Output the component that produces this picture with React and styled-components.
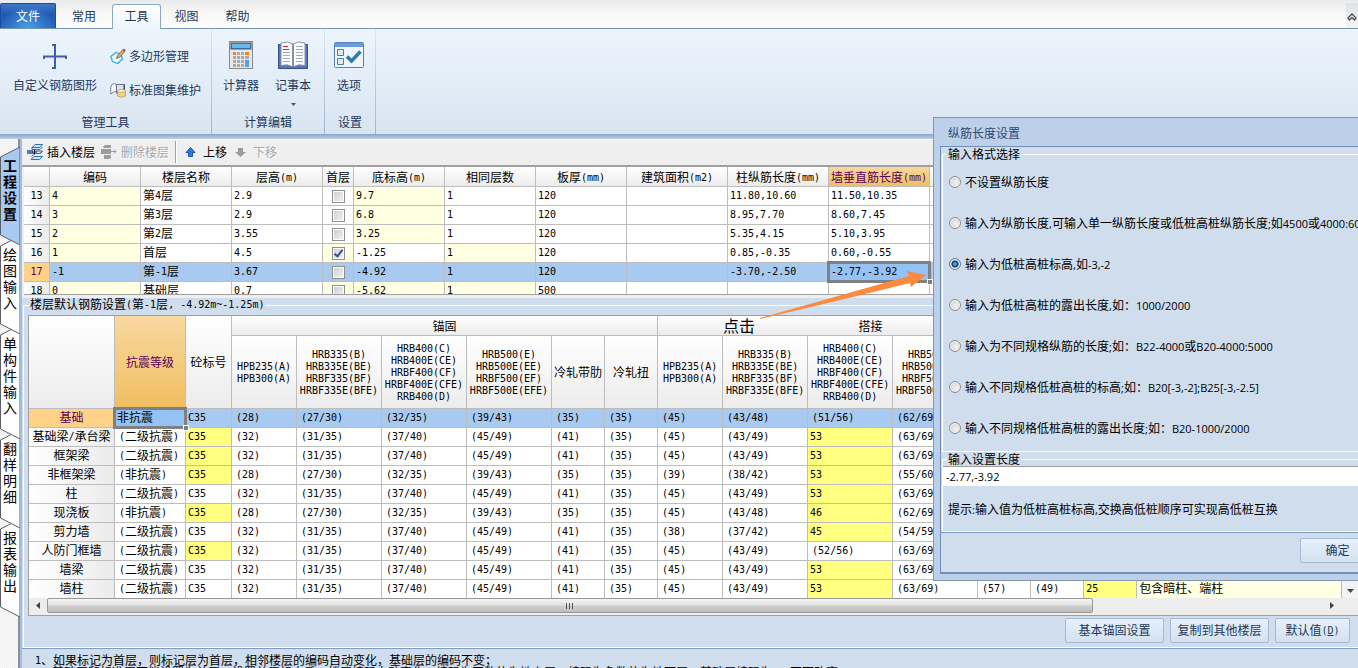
import React, { useState } from 'react';
import styled, { createGlobalStyle, css } from 'styled-components';

const GlobalStyle = createGlobalStyle`
  *, *::before, *::after { box-sizing: border-box; }
  body {
    margin: 0;
    overflow: hidden;
    font-family: "Noto Sans CJK SC", sans-serif;
    font-size: 12px;
    line-height: 16px;
    color: #000;
  }
  button, input { font: inherit; color: inherit; }
`;

const Mono = styled.span`
  font-family: "DejaVu Sans Mono", monospace;
  font-size: 10px;
  line-height: 0;
  vertical-align: 1px;
`;

const Ui = styled.span`
  font-family: "Open Sans", sans-serif;
  font-size: 11px;
  line-height: 0;
`;

// Sets the Latin runs of a string in their own face beside the Chinese text.
function Txt({ children, ui }) {
  const Run = ui ? Ui : Mono;
  return String(children)
    .split(/([\x20-\x7e]+)/)
    .filter(Boolean)
    .map((part, i) => (/^[\x20-\x7e]/.test(part) ? <Run key={i}>{part}</Run> : part));
}

const App = styled.div`
  position: relative;
  display: flex;
  flex-direction: column;
  height: 100vh;
  overflow: hidden;
  background: #d0dded;
`;

/* ---------- ribbon ---------- */

const TabBar = styled.nav`
  display: flex;
  align-items: flex-end;
  flex: none;
  height: 28px;
  background: linear-gradient(#e9eaeb, #f8f8f9 50%, #fdfdfd);
`;

const Tab = styled.button`
  height: 25px;
  padding: 0;
  width: ${(p) => p.$w}px;
  border: 0;
  background: none;
  color: #1e395b;
  ${(p) =>
    p.$kind === 'file' &&
    css`
      color: #fff;
      border: 1px solid #1c4a9c;
      border-bottom: 0;
      border-radius: 2px 2px 0 0;
      background: radial-gradient(ellipse at 50% 100%, #4c9be0, transparent 70%),
        linear-gradient(#3f76c8, #1f58b2 45%, #2567bd);
    `}
  ${(p) =>
    p.$kind === 'active' &&
    css`
      position: relative;
      height: 25px;
      margin-bottom: -1px;
      padding-bottom: 3px;
      border: 1px solid #8ba7cb;
      border-bottom: 0;
      border-radius: 3px 3px 0 0;
      background: linear-gradient(#fff, #eef4fc);
    `}
`;

const Collapse = styled.button`
  margin-left: auto;
  width: 12px;
  height: 25px;
  padding: 0;
  border: 0;
  background: linear-gradient(#e0e2e4, #f4f4f4);
`;

const RibbonBody = styled.div`
  display: flex;
  flex: none;
  height: 106px;
  border-top: 1px solid #7595be;
  background: linear-gradient(#edf4fc, #e4eef8 45%, #d8e4f1);
`;

const Group = styled.section`
  display: flex;
  flex-direction: column;
  width: ${(p) => p.$w}px;
  color: #1e395b;
  border-right: 1px solid;
  border-image: linear-gradient(#dbe6f2, #9db4d2) 1;
`;

const GroupTools = styled.div`
  display: flex;
  flex: 1;
  padding-left: ${(p) => p.$lead}px;
  gap: ${(p) => p.$gap}px;
`;

const GroupName = styled.div`
  height: 20px;
  text-align: center;
`;

const BigTool = styled.button`
  display: flex;
  flex-direction: column;
  align-items: center;
  gap: 6px;
  padding: 12px 0 0;
  border: 0;
  background: none;
  white-space: nowrap;
`;

const SmallTools = styled.div`
  display: flex;
  flex-direction: column;
  gap: 18px;
  padding-top: 19px;
`;

const SmallTool = styled.button`
  display: flex;
  align-items: center;
  gap: 3px;
  padding: 0;
  border: 0;
  background: none;
  white-space: nowrap;
`;

const Band = styled.div`
  flex: none;
  height: 5px;
  background: linear-gradient(#8ba7cb, #9db5d5 40%, #bfd1e8);
`;

/* ---------- side tabs ---------- */

const Body = styled.div`
  display: flex;
  flex: 1;
  min-height: 0;
`;

const SideBar = styled.nav`
  display: flex;
  flex-direction: column;
  flex: none;
  width: 20px;
  padding-top: 8px;
  border-right: 2px solid #8c8f96;
  background: repeating-conic-gradient(#efefef 0 25%, #fafafa 0 50%) 0 0 / 2px 2px;
`;

const SideTabButton = styled.button`
  position: relative;
  z-index: ${(p) => p.$z};
  display: flex;
  align-items: flex-start;
  flex: none;
  width: 20px;
  height: ${(p) => p.$h}px;
  margin-bottom: -9px;
  padding: 10px 0 0 3px;
  border: 0;
  background: none;
  font-size: 14px;
  line-height: 16px;
  font-weight: ${(p) => (p.$active ? 700 : 400)};
`;

const SideShape = styled.svg`
  position: absolute;
  left: 0;
  top: 0;
  z-index: -1;
`;

const SideLabel = styled.span`
  width: 14px;
  word-break: break-all;
`;

/* ---------- main panel ---------- */

const Main = styled.main`
  flex: 1;
  min-width: 0;
  display: flex;
  flex-direction: column;
  border-left: 2px solid #a5bcda;
`;

const ToolStrip = styled.div`
  display: flex;
  flex: none;
  align-items: center;
  gap: 6px;
  height: 28px;
  padding: 0 0 1px 5px;
  border-top: 1px solid #fff;
  border-bottom: 2px solid #a0a0a0;
  background: #efefef;
`;

const StripButton = styled.button`
  display: flex;
  align-items: center;
  gap: 4px;
  padding: 0;
  border: 0;
  background: none;
  &:disabled { color: #a6a6a6; text-shadow: 1px 1px 0 #fff; }
`;

const StripLine = styled.span`
  width: 2px;
  height: 22px;
  border-left: 1px solid #a0a0a0;
  border-right: 1px solid #fff;
`;

const FloorGrid = styled.div`
  flex: none;
  height: 131px;
  padding: 0 0 3px 2px;
  background: #efefef;
`;

const FloorClip = styled.div`
  height: 128px;
  overflow: hidden;
  border-bottom: 1px solid #a0a0a0;
  background: #fff;
`;

const Table = styled.table`
  width: 100%;
  table-layout: fixed;
  border-collapse: separate;
  border-spacing: 0;
  white-space: nowrap;
`;

const line = css`
  border-right: 1px solid #bdbdbd;
  border-bottom: 1px solid #bdbdbd;
`;

const Head = styled.th`
  ${line}
  height: ${(p) => p.$h}px;
  padding: 0;
  overflow: hidden;
  font-weight: 400;
  line-height: 12px;
  text-align: center;
  white-space: pre;
  background: linear-gradient(#fff, #ececec);
  ${(p) =>
    p.$hot &&
    css`
      color: #5a005a;
      background: linear-gradient(#f8d8a0, #f0be60);
    `}
`;

const RowHead = styled.th`
  ${line}
  height: 19px;
  padding: 0;
  overflow: hidden;
  font-weight: 400;
  line-height: 16px;
  vertical-align: top;
  background: ${(p) => (p.$hot ? '#ffd288' : 'linear-gradient(90deg, #fff, #ebebeb)')};
  color: ${(p) => (p.$hot ? '#5a005a' : '#000')};
`;

const tones = { pale: '#ffffe1', strong: '#ffff80', plain: '#fff' };

const Cell = styled.td`
  ${line}
  position: relative;
  height: 19px;
  padding: 0 0 0 ${(p) => p.$pad ?? 2}px;
  line-height: 16px;
  vertical-align: ${(p) => (p.$center ? 'middle' : 'top')};
  background: ${(p) => (p.$picked ? '#a8caf0' : tones[p.$tone || 'plain'])};
  ${(p) =>
    p.$focus &&
    css`
      z-index: 1;
      background: #94c2f4;
      &::before {
        content: '';
        position: absolute;
        inset: -2px;
        border: 3px solid #808080;
      }
      &::after {
        content: '';
        position: absolute;
        right: -4px;
        bottom: -4px;
        width: 6px;
        height: 6px;
        border: 1px solid #fff;
        background: #808080;
      }
    `}
`;

const Check = styled.input`
  appearance: none;
  display: block;
  position: relative;
  width: 13px;
  height: 13px;
  margin: 0 auto;
  border: 1px solid #8e8f8f;
  background: linear-gradient(135deg, #c9ced4, #f4f4f4);
  box-shadow: inset 0 0 0 1px #fff;
  &:checked::after {
    content: '';
    position: absolute;
    left: 3px;
    top: 0;
    width: 5px;
    height: 9px;
    border: solid #35508f;
    border-width: 0 2px 2px 0;
    transform: rotate(38deg);
  }
`;

const GroupBox = styled.fieldset`
  min-width: 0;
  margin: 0;
  padding: 0;
  border: 1px solid #fff;
`;

const Legend = styled.legend`
  height: 14px;
  margin-left: 4px;
  padding: 0 1px;
  line-height: 14px;
`;

const RebarBox = styled(GroupBox)`
  flex: none;
  margin: 0 0 0 1px;
  padding: 3px 0 0 4px;
  border-right: 0;
  & > ${Legend} { margin-left: 1px; line-height: 12px; }
`;

const RebarFrame = styled.div`
  border: 1px solid #a0a0a0;
  border-right: 0;
  background: #fff;
`;

const RebarBody = styled.div`
  display: flex;
  height: 282px;
  overflow: hidden;
`;

const RebarView = styled.div`
  flex: 1;
  min-width: 0;
`;

const VScroll = styled.div`
  display: flex;
  align-items: flex-end;
  flex: none;
  width: 16px;
  background: #f3f3f3;
`;

const HScroll = styled.div`
  display: flex;
  height: 17px;
  padding: 0 17px 2px 0;
  background: #ededed;
`;

const ScrollButton = styled.button`
  flex: none;
  width: 18px;
  height: 15px;
  padding: 0;
  border: 0;
  background: none;
`;

const EndButton = styled(ScrollButton)`
  margin-left: auto;
`;

const Thumb = styled.div`
  flex: 0 1 1046px;
  display: flex;
  align-items: center;
  justify-content: center;
  border: 1px solid #979797;
  border-radius: 2px;
  background: linear-gradient(#f4f4f4, #e3e3e3 48%, #cfcfcf 52%, #bebec0);
`;

const Footer = styled.div`
  display: flex;
  justify-content: flex-end;
  gap: 6px;
  padding: 2px 8px 4px 0;
`;

const PushButton = styled.button`
  width: ${(p) => p.$w}px;
  height: 25px;
  padding: 0 0 2px;
  border: 1px solid #a6b9d4;
  border-radius: 2px;
  color: #1e395b;
  background: linear-gradient(#e6f0fb, #d3e1f0);
`;

const Notes = styled.div`
  flex: 1;
  padding: 5px 0 0 13px;
  border-top: 1px solid #7f9dc4;
  line-height: 12px;
  white-space: nowrap;
`;

const NoteMore = styled.div`
  padding-left: 17px;
`;

/* ---------- dialog and callout ---------- */

const Dialog = styled.div`
  position: absolute;
  z-index: 20;
  right: -95px;
  top: 117px;
  width: 520px;
  height: 464px;
  padding: 1px 6px 6px;
  border: 1px solid #8496b0;
  background: #bdd0e9;
`;

const DialogTitle = styled.h1`
  height: 27px;
  margin: 0;
  padding-left: 8px;
  font-size: 12px;
  font-weight: 400;
  line-height: 28px;
  color: #2d4a75;
`;

const DialogFrame = styled.div`
  display: flex;
  flex-direction: column;
  height: 428px;
  border: 1px solid #6f8fba;
  border-bottom-width: 2px;
  background: #d0dded;
`;

const FormatBox = styled(GroupBox)`
  margin-left: 1px;
  height: 305px;
`;

const Options = styled.div`
  display: flex;
  flex-direction: column;
  gap: 25px;
  padding: 13px 0 0 6px;
`;

const Option = styled.label`
  display: flex;
  align-items: center;
  gap: 4px;
  white-space: nowrap;
`;

const Radio = styled.input`
  appearance: none;
  flex: none;
  width: 12px;
  height: 12px;
  margin: 0;
  border: 1px solid #8e8f8f;
  border-radius: 50%;
  box-shadow: inset 0 0 0 1px #f4f4f4;
  background: radial-gradient(circle at 60% 60%, #f2f2f2, #c8ccd0);
  &:checked {
    border-color: #6d7d8e;
    box-shadow: inset 0 0 0 1px #eef5fb;
    background: radial-gradient(circle, #3fa9dc 0 1px, #0c3a68 3px, #b4cde2 4px);
  }
`;

const LengthBox = styled(GroupBox)`
  margin-left: 1px;
  height: 80px;
`;

const LengthInput = styled.input`
  display: block;
  width: 100%;
  height: 20px;
  padding: 0 3px;
  border: 0;
  border-top: 1px solid #a0a0a0;
  font-family: "Open Sans", sans-serif;
  font-size: 11px;
  background: #fff;
`;

const Hint = styled.p`
  margin: 15px 0 0 5px;
`;

const DialogFooter = styled.div`
  display: flex;
  flex: 1;
  justify-content: flex-end;
  align-items: flex-start;
  padding: 5px 70px 0 0;
  border-top: 1px solid #7f9dc4;
`;

const Callout = styled.div`
  position: absolute;
  z-index: 10;
  left: 723px;
  top: 265px;
  width: 210px;
  height: 70px;
  display: flex;
  align-items: flex-end;
  font-size: 16px;
  line-height: 20px;
  pointer-events: none;
`;

const CalloutArrow = styled.svg`
  position: absolute;
  inset: 0;
`;

/* ---------- icons ---------- */

const RebarIcon = () => (
  <svg width="30" height="30" viewBox="0 0 30 30" fill="none" stroke="#3c5fa8" strokeWidth="2">
    <path d="M4 18v-2.500h22V18M12 4h3v23h-3" />
  </svg>
);

const PolygonIcon = () => (
  <svg width="16" height="16" viewBox="0 0 16 16">
    <path d="M6 4.500l5 1.500 1.500 5-5 4.500-5-2L.8 8.500z" fill="#e9f8ff" stroke="#2fb2e6" strokeWidth="1.300" />
    <path d="M6.500 10.500l1.200-3L12.500 2l2 1.800-5 5.500z" fill="#e6b468" stroke="#6b4a2a" strokeWidth=".8" />
    <path d="M12.500 2L14 .5l1.800 1.800-1.300 1.500z" fill="#a8503a" />
  </svg>
);

const AtlasIcon = () => (
  <svg width="16" height="16" viewBox="0 0 16 16">
    <path d="M.7 12V5Q1.500 1.500 4.500 1.500 6.500 2 6.500 4v6L4.500 9.500z" fill="#f2f4f6" stroke="#7d8796" />
    <path d="M6.500 2.500H14.500v9h-8z" fill="#dfe3e8" stroke="#6b7484" />
    <path d="M14.200 2.500v8" stroke="#4d5768" strokeWidth="1.600" />
    <path d="M7.500 9v5q4 2.500 8 0V9z" fill="#f0d48a" stroke="#b99a5c" strokeWidth=".8" />
    <ellipse cx="11.500" cy="9" rx="4" ry="1.500" fill="#fff3cc" stroke="#b99a5c" strokeWidth=".8" />
  </svg>
);

const CalculatorIcon = () => (
  <svg width="30" height="30" viewBox="0 0 30 30">
    <rect x="3.500" y=".5" width="23" height="27" fill="#e8e8e8" stroke="#8a8a8a" />
    <rect x="4" y="1" width="22" height="8" fill="#9a9da1" />
    <rect x="5.500" y="2.500" width="19" height="5" fill="#6bb8ee" stroke="#3a6da0" />
    {[11, 15, 19, 23].map((y, r) =>
      [7, 11, 15, 19].map((x, c) => (
        <rect
          key={`${x}-${y}`}
          x={x}
          y={y}
          width={c === 3 ? 4 : 3}
          height="3"
          fill={r === 0 && (c === 0 || c === 3) ? '#f08028' : '#a9a9a9'}
        />
      )),
    )}
    <rect x="19" y="19" width="4" height="7" fill="#5a9fe0" />
  </svg>
);

const BookIcon = () => (
  <svg width="30" height="30" viewBox="0 0 30 30">
    <path d="M.5 3.500h29v24h-29z" fill="#5674b8" stroke="#34508f" />
    <path d="M3 2q7-2.500 12 1 5-3.500 12-1v22.500q-7-2-12 1.500-5-3.500-12-1.500z" fill="#fbfbfb" stroke="#8a93a5" />
    <path d="M15 3v23" stroke="#6e7687" strokeWidth="1.600" />
    <path
      d="M5 11.500h7M5 14.500h7M5 17.500h7M5 20.500h7M18 5.500h7M18 8.500h7M18 11.500h7M18 14.500h7M18 17.500h7M18 20.500h7"
      stroke="#a3abb7"
    />
    <path d="M5 5.500h5M5 8.500h6" stroke="#d22a34" />
  </svg>
);

const OptionsIcon = () => (
  <svg width="30" height="30" viewBox="0 0 30 30">
    <rect x=".5" y="1.500" width="29" height="25" rx="1" fill="#eff5fc" stroke="#5580bf" />
    <rect x="1" y="2" width="28" height="4" fill="#6d9bd8" />
    <path d="M3.500 8.500h6v6h-6zM3.500 17.500h6v6h-6z" fill="#dcebf6" stroke="#48809f" />
    <path d="M13 15.500l4.500 4.500 9-9.500" fill="none" stroke="#2a7ab4" strokeWidth="3.500" />
  </svg>
);

const InsertIcon = () => (
  <svg width="16" height="16" viewBox="0 0 16 16">
    <path d="M5 3.500l3-3h7.500l-2.500 3zM6 9.500l2.500-2.500h7L13 9.500zM4 15.500l3-3h8.500l-3 3z" fill="#cfe6f8" stroke="#2f6fae" />
    <path d="M5 3.500v2h8l2.500-2.500M13 9.500l2.500-2M4.500 12.500L7 10.500" fill="none" stroke="#2f6fae" />
    <path d="M0 8h6" stroke="#5578b8" strokeWidth="4" />
    <path d="M5 8h5M7.500 5.500v5" stroke="#222" />
  </svg>
);

const DeleteIcon = () => (
  <svg width="16" height="16" viewBox="0 0 16 16" fill="#9c9c9c">
    <path d="M2 3l2-2h6v3H3zM0 5h10v5H0zM3 11h7v3l-2 1H3z" />
    <path d="M10 7.500h5M13 5.500l2 2-2 2" fill="none" stroke="#9c9c9c" />
  </svg>
);

const MoveIcon = ({ down }) => (
  <svg width="16" height="16" viewBox="0 0 16 16">
    {down ? (
      <path d="M5 4h5v4h3l-5.500 5L2 8h3z" fill="#9a9a9a" />
    ) : (
      <path d="M5.500 12.500v-4H3l4.500-5 4.500 5H9.500v4z" fill="#2f7bdc" stroke="#1c4fb0" />
    )}
  </svg>
);

const Glyph = styled.svg`
  display: block;
  margin: auto;
`;

const Triangle = ({ d, color = '#444' }) => (
  <Glyph width="8" height="8" viewBox="0 0 8 8">
    <path d={d} fill={color} />
  </Glyph>
);

/* ---------- data ---------- */

const floorColumns = [26, 91, 91, 91, 31, 91, 91, 91, 101, 101, 101];
const floorHeads = ['', '编码', '楼层名称', '层高(m)', '首层', '底标高(m)', '相同层数', '板厚(mm)', '建筑面积(m2)', '柱纵筋长度(mm)', '墙垂直筋长度(mm)'];
const floors = [
  { no: 13, cells: ['4', '第4层', '2.9', false, '9.7', '1', '120', '', '11.80,10.60', '11.50,10.35'], pale: [0, 4] },
  { no: 14, cells: ['3', '第3层', '2.9', false, '6.8', '1', '120', '', '8.95,7.70', '8.60,7.45'], pale: [0, 4] },
  { no: 15, cells: ['2', '第2层', '3.55', false, '3.25', '1', '120', '', '5.35,4.15', '5.10,3.95'], pale: [0, 4] },
  { no: 16, cells: ['1', '首层', '4.5', true, '-1.25', '1', '120', '', '0.85,-0.35', '0.60,-0.55'], pale: [0, 3, 5] },
  { no: 17, cells: ['-1', '第-1层', '3.67', false, '-4.92', '1', '120', '', '-3.70,-2.50', '-2.77,-3.92'], pale: [], picked: true },
  { no: 18, cells: ['0', '基础层', '0.7', false, '-5.62', '1', '500', '', '', ''], pale: [0, 3, 4, 5] },
];

const rebarColumns = [86, 71, 46, 65, 85, 85, 85, 53, 53, 65, 85, 85, 85, 53, 53, 53];
const gradeHeads = [
  'HPB235(A)\nHPB300(A)',
  'HRB335(B)\nHRB335E(BE)\nHRBF335(BF)\nHRBF335E(BFE)',
  'HRB400(C)\nHRB400E(CE)\nHRBF400(CF)\nHRBF400E(CFE)\nRRB400(D)',
  'HRB500(E)\nHRB500E(EE)\nHRBF500(EF)\nHRBF500E(EFE)',
  '冷轧带肋',
  '冷轧扭',
];

const high = ['(32)', '(31/35)', '(37/40)', '(45/49)', '(41)', '(35)', '(45)', '(43/49)', '53', '(63/69)', '(57)', '(49)', '25'];
const low = ['(28)', '(27/30)', '(32/35)', '(39/43)', '(35)', '(35)', '(39)', '(38/42)', '53', '(55/60)', '(49)', '(49)', '25'];
const change = (base, edits) => base.map((v, i) => edits[i] ?? v);

const rebarRows = [
  { name: '基础', level: '非抗震', values: change(low, { 6: '(45)', 7: '(43/48)', 8: '(51/56)', 9: '(62/69)' }), picked: true },
  { name: '基础梁/承台梁', level: '(二级抗震)', values: high, mark: true },
  { name: '框架梁', level: '(二级抗震)', values: high, mark: true },
  { name: '非框架梁', level: '(非抗震)', values: low, mark: true },
  { name: '柱', level: '(二级抗震)', values: high },
  { name: '现浇板', level: '(非抗震)', values: change(low, { 6: '(45)', 7: '(43/48)', 8: '46', 9: '(62/69)' }), mark: true },
  { name: '剪力墙', level: '(二级抗震)', values: change(high, { 6: '(38)', 7: '(37/42)', 8: '45', 9: '(54/59)' }) },
  { name: '人防门框墙', level: '(二级抗震)', values: change(high, { 8: '(52/56)' }), mark: true },
  { name: '墙梁', level: '(二级抗震)', values: high },
  { name: '墙柱', level: '(二级抗震)', values: high, note: '包含暗柱、端柱' },
];

const sideTabs = ['工程设置', '绘图输入', '单构件输入', '翻样明细', '报表输出'];

const formats = [
  '不设置纵筋长度',
  '输入为纵筋长度,可输入单一纵筋长度或低桩高桩纵筋长度;如4500或4000:6000',
  '输入为低桩高桩标高,如-3,-2',
  '输入为低桩高桩的露出长度,如：1000/2000',
  '输入为不同规格纵筋的长度;如：B22-4000或B20-4000:5000',
  '输入不同规格低桩高桩的标高;如：B20[-3,-2];B25[-3,-2.5]',
  '输入不同规格低桩高桩的露出长度;如：B20-1000/2000',
];

const Columns = ({ widths }) => (
  <colgroup>
    {widths.map((w, i) => (
      <col key={i} width={w} />
    ))}
    <col />
  </colgroup>
);

function SideTab({ name, index }) {
  const active = index === 0;
  const h = 34 + name.length * 16;
  return (
    <SideTabButton $h={h} $z={9 - index} $active={active}>
      <SideShape width="20" height={h}>
        <path
          d={`M20 0L.5 10V${h - 10}L20 ${h}z`}
          fill={active ? '#a8caf0' : '#fff'}
          stroke="#5c5f66"
        />
      </SideShape>
      <SideLabel>{name}</SideLabel>
    </SideTabButton>
  );
}

function FloorTable() {
  return (
    <Table>
      <Columns widths={floorColumns} />
      <thead>
        <tr>
          {floorHeads.map((h, i) => (
            <Head key={i} $h={20} $hot={i === 10}>
              <Txt>{h}</Txt>
            </Head>
          ))}
          <Head $h={20} />
        </tr>
      </thead>
      <tbody>
        {floors.map((f) => (
          <tr key={f.no}>
            <RowHead $hot={f.picked}>
              <Txt>{f.no}</Txt>
            </RowHead>
            {f.cells.map((c, i) => (
              <Cell
                key={i}
                $picked={f.picked}
                $focus={f.picked && i === 9}
                $tone={f.pale.includes(i) ? 'pale' : 'plain'}
                $center={i === 3}
                $pad={i === 3 ? 0 : 2}
              >
                {i === 3 ? (
                  <Check type="checkbox" defaultChecked={c} aria-label={`首层 ${f.no}`} />
                ) : (
                  <Txt>{c}</Txt>
                )}
              </Cell>
            ))}
            <Cell $picked={f.picked} />
          </tr>
        ))}
      </tbody>
    </Table>
  );
}

function RebarTable() {
  return (
    <Table>
      <Columns widths={rebarColumns} />
      <thead>
        <tr>
          <Head rowSpan={2} />
          <Head rowSpan={2} $hot>抗震等级</Head>
          <Head rowSpan={2}>砼标号</Head>
          <Head colSpan={6} $h={20}>锚固</Head>
          <Head colSpan={6} $h={20}>搭接</Head>
          <Head rowSpan={2} />
          <Head rowSpan={2} />
        </tr>
        <tr>
          {[...gradeHeads, ...gradeHeads].map((h, i) => (
            <Head key={i} $h={73}>
              <Txt>{h}</Txt>
            </Head>
          ))}
        </tr>
      </thead>
      <tbody>
        {rebarRows.map((r) => (
          <tr key={r.name}>
            <RowHead $hot={r.picked}>
              <Txt>{r.name}</Txt>
            </RowHead>
            <Cell $picked={r.picked} $focus={r.picked} $pad={r.picked ? 2 : 4}>
              <Txt>{r.level}</Txt>
            </Cell>
            <Cell $picked={r.picked} $tone={r.mark ? 'strong' : 'plain'}>
              <Txt>C35</Txt>
            </Cell>
            {r.values.map((v, i) => {
              const own = !v.startsWith('(');
              return (
                <Cell key={i} $picked={r.picked} $tone={own ? 'strong' : 'plain'} $pad={own ? 2 : 4}>
                  <Txt>{v}</Txt>
                </Cell>
              );
            })}
            <Cell $picked={r.picked} $tone="pale">{r.note}</Cell>
          </tr>
        ))}
      </tbody>
    </Table>
  );
}

export default function Page() {
  const [format, setFormat] = useState(2);
  return (
    <App>
      <GlobalStyle />
      <TabBar>
        <Tab $kind="file" $w={56}>文件</Tab>
        <Tab $w={56}>常用</Tab>
        <Tab $kind="active" $w={49}>工具</Tab>
        <Tab $w={51}>视图</Tab>
        <Tab $w={51}>帮助</Tab>
        <Collapse aria-label="收起功能区">
          <svg width="10" height="8" viewBox="0 0 10 8" fill="#fff" stroke="#444b57" strokeWidth="1.300">
            <path d="M1 5l4-4 4 4-1.500 2L5 4.500 2.500 7z" />
          </svg>
        </Collapse>
      </TabBar>
      <RibbonBody>
        <Group $w={212}>
          <GroupTools $lead={13} $gap={13}>
            <BigTool>
              <RebarIcon />
              自定义钢筋图形
            </BigTool>
            <SmallTools>
              <SmallTool>
                <PolygonIcon />
                多边形管理
              </SmallTool>
              <SmallTool>
                <AtlasIcon />
                标准图集维护
              </SmallTool>
            </SmallTools>
          </GroupTools>
          <GroupName>管理工具</GroupName>
        </Group>
        <Group $w={113}>
          <GroupTools $lead={11} $gap={16}>
            <BigTool>
              <CalculatorIcon />
              计算器
            </BigTool>
            <BigTool>
              <BookIcon />
              记事本
              <Triangle d="M2 0h5L4.500 3z" color="#4a5260" />
            </BigTool>
          </GroupTools>
          <GroupName>计算编辑</GroupName>
        </Group>
        <Group $w={51}>
          <GroupTools $lead={9}>
            <BigTool>
              <OptionsIcon />
              选项
            </BigTool>
          </GroupTools>
          <GroupName>设置</GroupName>
        </Group>
      </RibbonBody>
      <Band />
      <Body>
        <SideBar>
          {sideTabs.map((name, i) => (
            <SideTab key={name} name={name} index={i} />
          ))}
        </SideBar>
        <Main>
          <ToolStrip>
            <StripButton>
              <InsertIcon />
              插入楼层
            </StripButton>
            <StripButton disabled>
              <DeleteIcon />
              删除楼层
            </StripButton>
            <StripLine />
            <StripButton>
              <MoveIcon />
              上移
            </StripButton>
            <StripButton disabled>
              <MoveIcon down />
              下移
            </StripButton>
          </ToolStrip>
          <FloorGrid>
            <FloorClip>
              <FloorTable />
            </FloorClip>
          </FloorGrid>
          <RebarBox>
            <Legend>
              <Txt>楼层默认钢筋设置(第-1层, -4.92m~-1.25m)</Txt>
            </Legend>
            <RebarFrame>
              <RebarBody>
                <RebarView>
                  <RebarTable />
                </RebarView>
                <VScroll>
                  <ScrollButton aria-label="向下滚动">
                    <Triangle d="M0 2h7L3.500 6z" />
                  </ScrollButton>
                </VScroll>
              </RebarBody>
              <HScroll>
                <ScrollButton aria-label="向左滚动">
                  <Triangle d="M6 0v7L2 3.500z" />
                </ScrollButton>
                <Thumb>
                  <svg width="8" height="6" viewBox="0 0 8 6" stroke="#555">
                    <path d="M.5 0v6M3.500 0v6M6.500 0v6" />
                  </svg>
                </Thumb>
                <EndButton aria-label="向右滚动">
                  <Triangle d="M2 0v7L6 3.500z" />
                </EndButton>
              </HScroll>
            </RebarFrame>
            <Footer>
              <PushButton $w={99}>基本锚固设置</PushButton>
              <PushButton $w={99}>复制到其他楼层</PushButton>
              <PushButton $w={75}>
                默认值<Mono>(<u>D</u>)</Mono>
              </PushButton>
            </Footer>
          </RebarBox>
          <Notes>
            <div>
              <Txt>1、如果标记为首层，则标记层为首层，相邻楼层的编码自动变化，基础层的编码不变；</Txt>
            </div>
            <NoteMore>
              <Txt>基础层和标准层不能设置为首层；设置首层标志后，楼层编码自动变化，编码为正数的为地上层，编码为负数的为地下层，基础层编码为0，不可改变</Txt>
            </NoteMore>
          </Notes>
        </Main>
      </Body>

      <Callout>
        点击
        <CalloutArrow width="210" height="70">
          <path d="M37 53L186 11L184 6L203 10L188 22L187 18Q110 37 37 54z" fill="#fb8a3c" />
        </CalloutArrow>
      </Callout>

      <Dialog role="dialog" aria-labelledby="dialog-title">
        <DialogTitle id="dialog-title">纵筋长度设置</DialogTitle>
        <DialogFrame>
          <FormatBox>
            <Legend>输入格式选择</Legend>
            <Options>
              {formats.map((f, i) => (
                <Option key={f}>
                  <Radio type="radio" name="format" checked={format === i} onChange={() => setFormat(i)} />
                  <span>
                    <Txt ui>{f}</Txt>
                  </span>
                </Option>
              ))}
            </Options>
          </FormatBox>
          <LengthBox>
            <Legend>输入设置长度</Legend>
            <LengthInput defaultValue="-2.77,-3.92" aria-label="输入设置长度" />
            <Hint>
              <Txt ui>提示:输入值为低桩高桩标高,交换高低桩顺序可实现高低桩互换</Txt>
            </Hint>
          </LengthBox>
          <DialogFooter>
            <PushButton $w={75}>确定</PushButton>
          </DialogFooter>
        </DialogFrame>
      </Dialog>
    </App>
  );
}
